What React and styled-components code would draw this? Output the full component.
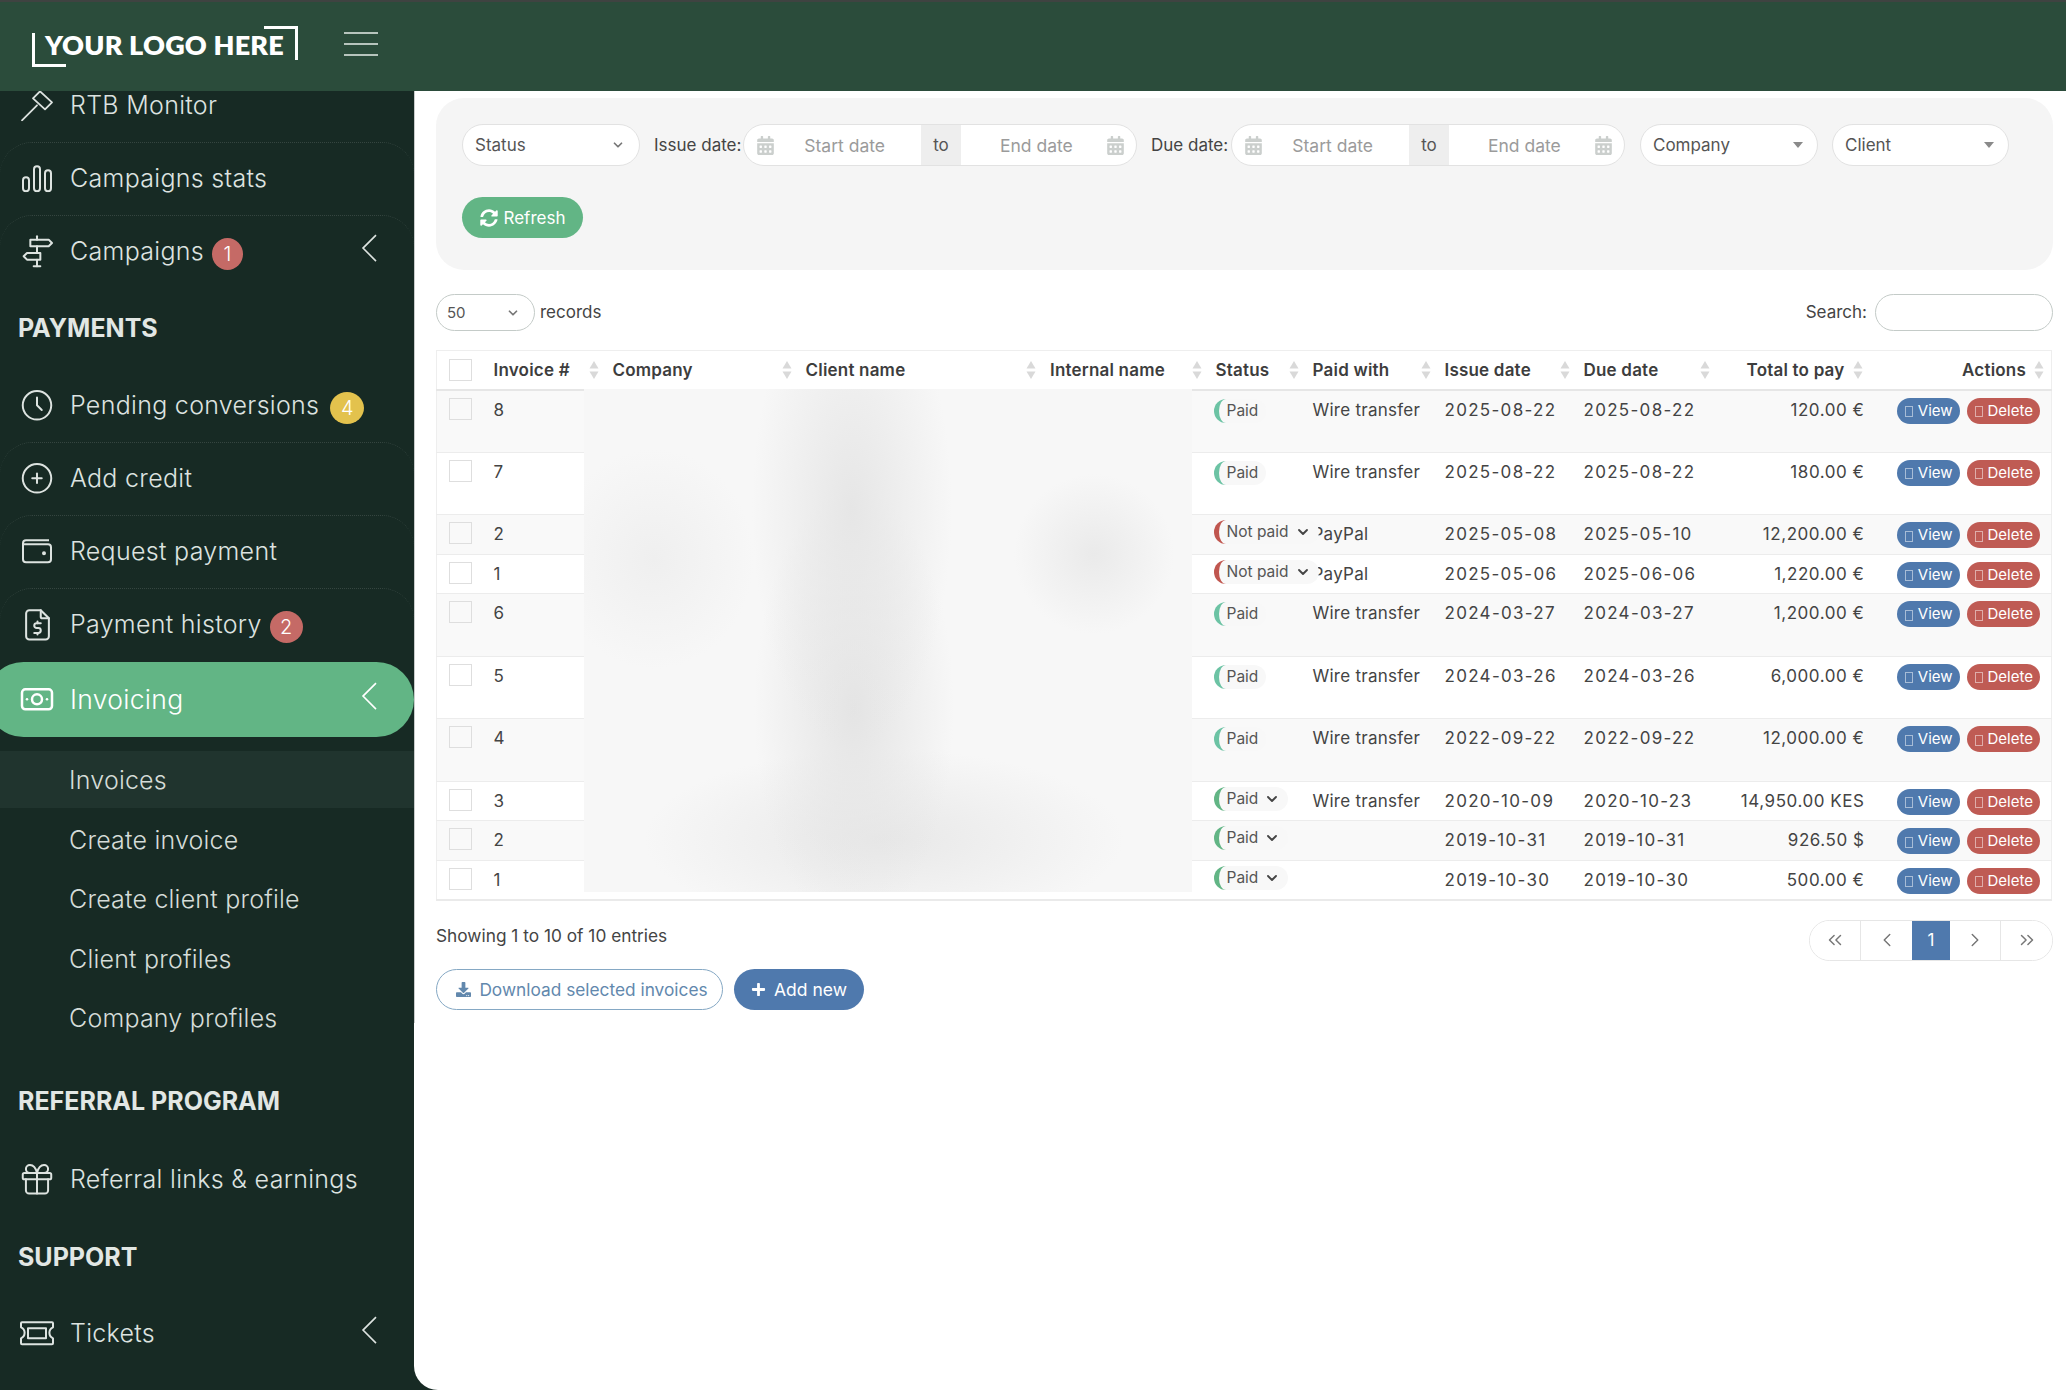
import React from "react";
import styled, { createGlobalStyle } from "styled-components";
import {
  TbDirections,
  TbClock,
  TbCirclePlus,
  TbFileDollar,
  TbCashBanknote,
  TbGift,
} from "react-icons/tb";
import { FaCalendarAlt, FaSyncAlt, FaDownload, FaPlus } from "react-icons/fa";
import { ChevronDown, ChevronLeft, ChevronRight, ChevronsLeft, ChevronsRight } from "lucide-react";

const GlobalStyle = createGlobalStyle`
  * { box-sizing: border-box; }
  html, body { margin: 0; padding: 0; background: #172a24; }
  body { font-family: "Inter", "Liberation Sans", sans-serif; color: #444; }
`;

//Hand drawn icons that the packages don't have
const HammerIcon = () => (
  <svg width="34" height="32" viewBox="0 0 34 32" fill="none" stroke="currentColor" strokeWidth="1.8">
    <path d="M2 31 L17 16" strokeLinecap="round" />
    <path d="M13 9 L20 2 L32 13 L25 20 Z" strokeLinejoin="round" />
  </svg>
);

const BarsIcon = () => (
  <svg width="32" height="28" viewBox="0 0 32 28" fill="none" stroke="currentColor" strokeWidth="2">
    <rect x="2" y="13" width="6" height="14" rx="3" />
    <rect x="13" y="2" width="6" height="25" rx="3" />
    <rect x="24" y="6" width="6" height="21" rx="3" />
  </svg>
);

const WalletIcon = () => (
  <svg width="32" height="28" viewBox="0 0 32 28" fill="none" stroke="currentColor" strokeWidth="2">
    <path d="M28 3 H5 a3 3 0 0 0 -3 3 V22 a3 3 0 0 0 3 3 H27 a3 3 0 0 0 3 -3 V10 a3 3 0 0 0 -3 -3 H2" />
    <circle cx="23" cy="16" r="1" fill="currentColor" />
  </svg>
);

const TicketIcon = () => (
  <svg width="36" height="26" viewBox="0 0 36 26" fill="none" stroke="currentColor" strokeWidth="2" strokeLinejoin="round">
    <path d="M3 2 H33 a1 1 0 0 1 1 1 V7 a6 6 0 0 0 0 11 V23 a1 1 0 0 1 -1 1 H3 a1 1 0 0 1 -1 -1 V18 a6 6 0 0 0 0 -11 V3 a1 1 0 0 1 1 -1 Z" />
    <rect x="9" y="8" width="18" height="10" />
  </svg>
);

const BackChevron = () => (
  <svg width="16" height="28" viewBox="0 0 16 28" fill="none" stroke="currentColor" strokeWidth="1.6">
    <path d="M15 1 L2 14 L15 27" />
  </svg>
);

const SortIcon = () => (
  <svg width="10" height="20" viewBox="0 0 10 20" fill="#d9d9d9">
    <path d="M5 1 L9.5 8.5 H0.5 Z" />
    <path d="M5 19 L0.5 11.5 H9.5 Z" />
  </svg>
);

const Caret = () => (
  <svg width="10" height="6" viewBox="0 0 10 6" fill="#8a8a8a">
    <path d="M0 0 H10 L5 6 Z" />
  </svg>
);

const Page = styled.div`
  width: 2066px;
  height: 1390px;
  overflow: hidden;
  display: flex;
  flex-direction: column;
`;

const Header = styled.header`
  height: 91px;
  flex: none;
  background: #2b4c3b;
  border-top: 2px solid #3f4341;
  display: flex;
  align-items: center;
  padding-left: 32px;
  position: relative;
  z-index: 2;
`;

const Logo = styled.div`
  width: 266px;
  height: 41px;
  position: relative;
  display: flex;
  align-items: center;
  padding: 0 0 4px 13px;
  color: #fff;
  font-family: "Lato", "Liberation Sans", sans-serif;
  font-weight: 800;
  font-size: 27px;
  letter-spacing: 0.2px;
  white-space: nowrap;
  &::before,
  &::after {
    content: "";
    position: absolute;
    width: 31px;
    height: 31px;
  }
  &::before {
    left: 0;
    bottom: 0;
    border-left: 3px solid #fff;
    border-bottom: 3px solid #fff;
  }
  &::after {
    right: 0;
    top: 0;
    border-right: 3px solid #fff;
    border-top: 3px solid #fff;
  }
`;

const Burger = styled.div`
  margin: 0 0 5px 46px;
  width: 34px;
  display: flex;
  flex-direction: column;
  gap: 9px;
  span {
    height: 2px;
    background: #b7c5bd;
  }
`;

const Body = styled.div`
  flex: 1;
  display: flex;
  min-height: 0;
`;

const Sidebar = styled.aside`
  width: 414px;
  flex: none;
  background: #172a24;
  overflow: hidden;
  color: #dde3e0;
`;

const SideList = styled.nav`
  margin-top: -22px;
  display: flex;
  flex-direction: column;
`;

const SideItem = styled.div`
  height: ${(p) => (p.$active ? "75px" : "73px")};
  display: flex;
  align-items: center;
  position: relative;
  font-size: ${(p) => (p.$active ? "26.5px" : "25px")};
  line-height: 1.1;
  font-weight: 300;
  letter-spacing: 0.3px;
  white-space: nowrap;
  border-top: ${(p) => (p.$line ? "1px dotted rgba(255,255,255,0.13)" : "none")};
  border-radius: ${(p) => (p.$active ? "38px" : "32px 32px 0 0")};
  background: ${(p) => (p.$active ? "#62b585" : "transparent")};
  color: ${(p) => (p.$active ? "#fff" : "inherit")};
  margin-left: ${(p) => (p.$active ? "-14px" : "0")};
  padding-left: ${(p) => (p.$active ? "84px" : "70px")};
  margin-top: ${(p) => (p.$active ? "1px" : "0")};
`;

const SideIcon = styled.span`
  position: absolute;
  left: ${(p) => (p.$active ? "36px" : "22px")};
  width: 30px;
  height: 34px;
  top: 50%;
  transform: translateY(-52%);
  display: flex;
  align-items: center;
  justify-content: center;
  svg {
    flex: none;
  }
`;

const SideChevron = styled.span`
  position: absolute;
  right: 37px;
  top: 50%;
  transform: translateY(-64%);
  display: flex;
`;

const Badge = styled.span`
  margin-left: ${(p) => p.$gap || 8}px;
  width: ${(p) => p.$width || 31}px;
  height: 32px;
  border-radius: 50%;
  background: ${(p) => (p.$warn ? "#e3c24d" : "#c56a66")};
  color: #fff;
  display: inline-flex;
  align-items: center;
  justify-content: center;
  font-size: 20px;
  font-weight: 300;
  transform: translateY(2px);
`;

const SectionTitle = styled.div`
  height: ${(p) => p.$height}px;
  padding-top: ${(p) => p.$top}px;
  padding-left: 18px;
  font-size: 25px;
  font-weight: 700;
  line-height: 32px;
  color: #e2e7e4;
  white-space: nowrap;
`;

const SubList = styled.div`
  margin-top: 14px;
  display: flex;
  flex-direction: column;
`;

const SubItem = styled.div`
  height: ${(p) => (p.$current ? "57px" : "59.5px")};
  margin-bottom: ${(p) => (p.$current ? "2px" : "0")};
  display: flex;
  align-items: center;
  padding-left: 69px;
  font-size: 25px;
  font-weight: 300;
  letter-spacing: 0.2px;
  color: #d5dcd8;
  background: ${(p) => (p.$current ? "#20342e" : "transparent")};
`;

const Main = styled.main`
  flex: 1;
  background: #fff;
  border-bottom-left-radius: 24px;
  padding: 7px 13px 0 22px;
  position: relative;
  min-width: 0;
  &::before {
    content: "";
    position: absolute;
    left: 0;
    top: 0;
    width: 1px;
    height: 932px;
    background: #c9cccb;
  }
`;

const FilterPanel = styled.section`
  height: 172px;
  background: #f5f5f5;
  border-radius: 28px;
  padding: 26px 0 0 26px;
`;

const FilterRow = styled.div`
  display: flex;
  align-items: center;
  height: 42px;
`;

const Select = styled.div`
  width: ${(p) => p.$width}px;
  height: ${(p) => p.$height || 42}px;
  margin-left: ${(p) => p.$gap || 0}px;
  background: #fff;
  border: 1px solid ${(p) => (p.$plain ? "#c4cbc8" : "#e2e2e2")};
  border-radius: 21px;
  padding: 0 ${(p) => (p.$plain ? "14px 0 10px" : "14px 0 12px")};
  display: flex;
  align-items: center;
  justify-content: space-between;
  font-size: ${(p) => p.$size || 17}px;
  color: #555;
  flex: none;
  svg {
    flex: none;
  }
`;

const FilterLabel = styled.span`
  width: ${(p) => p.$width}px;
  margin-left: 14px;
  font-size: 17px;
  color: #444;
  white-space: nowrap;
  flex: none;
`;

const DateGroup = styled.div`
  width: 394px;
  height: 42px;
  flex: none;
  display: grid;
  grid-template-columns: 177px 40px 177px;
  background: #fff;
  border: 1px solid #e2e2e2;
  border-radius: 21px;
  overflow: hidden;
`;

const DateField = styled.div`
  display: flex;
  align-items: center;
  justify-content: space-between;
  flex-direction: ${(p) => (p.$reverse ? "row-reverse" : "row")};
  padding: ${(p) => (p.$reverse ? "0 13px 0 39px" : "0 36px 0 12px")};
  font-size: 17.5px;
  color: #9b9b9b;
  white-space: nowrap;
  svg {
    color: #cbcfcd;
    font-size: 19px;
  }
`;

const DateTo = styled.div`
  background: #eeeeee;
  display: flex;
  align-items: center;
  justify-content: center;
  font-size: 17px;
  color: #555;
`;

const RefreshButton = styled.button`
  margin-top: 31px;
  width: 121px;
  height: 41px;
  border: none;
  border-radius: 21px;
  background: #62b585;
  color: #fff;
  font: inherit;
  font-size: 17px;
  display: flex;
  align-items: center;
  justify-content: center;
  gap: 6px;
  padding: 0;
`;

const RecordsBar = styled.div`
  margin-top: 24px;
  height: 37px;
  display: flex;
  align-items: center;
  justify-content: space-between;
  font-size: 17px;
  color: #444;
`;

const BarGroup = styled.div`
  display: flex;
  align-items: center;
  gap: ${(p) => p.$gap}px;
`;

const BarLabel = styled.span`
  margin-bottom: 2px;
`;

const SearchInput = styled.div`
  width: 178px;
  height: 37px;
  background: #fff;
  border: 1px solid #c4cbc8;
  border-radius: 19px;
`;

const TableWrap = styled.div`
  margin-top: 19px;
  position: relative;
`;

const Table = styled.table`
  width: 1615px;
  table-layout: fixed;
  border-collapse: collapse;
  border: 1px solid #eeeeee;
  border-bottom: 2px solid #eaeaea;
  font-size: 17px;
  color: #444;
`;

const HeadCell = styled.th`
  height: 39px;
  padding: 0 7px;
  border-bottom: 2px solid #e6e6e6;
  background: #fff;
  font-weight: 600;
  font-size: 17px;
  letter-spacing: 0.2px;
  color: #3d3d3d;
  text-align: left;
`;

const HeadInner = styled.div`
  display: flex;
  align-items: center;
  gap: 8px;
  justify-content: ${(p) => (p.$end ? "flex-end" : "space-between")};
  white-space: nowrap;
`;

const Row = styled.tr`
  background: ${(p) => (p.$odd ? "#f9f9f9" : "#fff")};
`;

const Cell = styled.td`
  height: ${(p) => (p.$tall ? "62.5px" : "39.5px")};
  padding: 7px ${(p) => (p.$pad ? p.$pad : 7)}px 0 7px;
  vertical-align: top;
  border-top: 1px solid #ececec;
  line-height: 24px;
  white-space: nowrap;
  text-align: ${(p) => (p.$right ? "right" : "left")};
  letter-spacing: ${(p) => p.$spacing || "0.25px"};
`;

const CheckBox = styled.div`
  width: 23px;
  height: 22px;
  border: 1px solid #dedede;
  margin-left: 5px;
`;

const StatusPill = styled.div`
  display: inline-flex;
  align-items: center;
  vertical-align: top;
  position: relative;
  z-index: 1;
  height: 24px;
  margin-left: -2px;
  margin-top: ${(p) => (p.$select ? "-2px" : "1px")};
  padding: 0 8px;
  gap: 6px;
  border-left: 5px solid ${(p) => (p.$unpaid ? "#c0564f" : p.$select ? "#62b585" : "#6cc3a4")};
  border-radius: 13px;
  background: #f8f8f8;
  font-size: 15.5px;
  letter-spacing: 0;
  color: #555;
`;

const ActionGroup = styled.div`
  display: flex;
  justify-content: flex-end;
  gap: 7px;
`;

const ActionButton = styled.button`
  height: 26px;
  border: none;
  border-radius: 13px;
  padding: 0 7px 0 8px;
  background: ${(p) => (p.$danger ? "#bf5b54" : "#4f79ad")};
  color: #fff;
  font: inherit;
  font-size: 15px;
  letter-spacing: 0;
  display: flex;
  align-items: center;
  gap: 5px;
  i {
    width: 8px;
    height: 11px;
    margin-top: 2px;
    border: 1px solid rgba(255, 255, 255, 0.5);
  }
`;

const BlurredColumns = styled.div`
  position: absolute;
  left: 148px;
  top: 39px;
  width: 608px;
  height: 503px;
  z-index: 1;
  background:
    radial-gradient(ellipse 100px 240px at 268px 120px, #e6e6e6 0%, rgba(230, 230, 230, 0) 100%),
    radial-gradient(ellipse 100px 220px at 270px 320px, #e4e4e4 0%, rgba(228, 228, 228, 0) 100%),
    radial-gradient(ellipse 240px 90px at 300px 450px, #e8e8e8 0%, rgba(232, 232, 232, 0) 100%),
    radial-gradient(ellipse 80px 80px at 510px 165px, #eaeaea 0%, rgba(234, 234, 234, 0) 100%),
    radial-gradient(ellipse 100px 110px at 70px 170px, #efefef 0%, rgba(239, 239, 239, 0) 100%),
    #f7f7f7;
`;

const TableFooter = styled.div`
  display: flex;
  justify-content: space-between;
  padding-top: 19px;
`;

const FooterLeft = styled.div`
  display: flex;
  flex-direction: column;
  gap: 17px;
`;

const EntriesInfo = styled.div`
  height: 32px;
  line-height: 32px;
  font-size: 17.3px;
  color: #444;
`;

const FooterButtons = styled.div`
  display: flex;
  gap: 11px;
`;

const OutlineButton = styled.button`
  width: 287px;
  height: 41px;
  background: #fff;
  border: 1px solid #85a8c4;
  border-radius: 21px;
  color: #6288ad;
  font: inherit;
  font-size: 17.3px;
  display: flex;
  align-items: center;
  justify-content: center;
  gap: 8px;
  padding: 0 0 0 5px;
`;

const SolidButton = styled.button`
  width: 130px;
  height: 41px;
  background: #4f79ad;
  border: none;
  border-radius: 21px;
  color: #fff;
  font: inherit;
  font-size: 17.5px;
  display: flex;
  align-items: center;
  justify-content: center;
  gap: 8px;
  padding: 0;
`;

const Pagination = styled.div`
  height: 41px;
  display: flex;
  border: 1px solid #e6e6e6;
  border-radius: 21px;
  overflow: hidden;
`;

const PageCell = styled.div`
  width: ${(p) => (p.$active ? "38px" : "51px")};
  display: flex;
  align-items: center;
  justify-content: center;
  color: ${(p) => (p.$active ? "#fff" : "#777")};
  background: ${(p) => (p.$active ? "#4f79ad" : "#fff")};
  border-right: ${(p) => (p.$line ? "1px solid #e6e6e6" : "none")};
  font-size: 17px;
`;

const columns = [
  { label: "Invoice #", width: 119 },
  { label: "Company", width: 193 },
  { label: "Client name", width: 244.5 },
  { label: "Internal name", width: 165.5 },
  { label: "Status", width: 97 },
  { label: "Paid with", width: 132 },
  { label: "Issue date", width: 139 },
  { label: "Due date", width: 140 },
  { label: "Total to pay", width: 153, end: true },
  { label: "Actions", width: 182, end: true },
];

const invoices = [
  { id: 8, tall: true, status: "Paid", method: "Wire transfer", issue: "2025-08-22", due: "2025-08-22", total: "120.00 €" },
  { id: 7, tall: true, status: "Paid", method: "Wire transfer", issue: "2025-08-22", due: "2025-08-22", total: "180.00 €" },
  { id: 2, status: "Not paid", select: true, method: "PayPal", issue: "2025-05-08", due: "2025-05-10", total: "12,200.00 €" },
  { id: 1, status: "Not paid", select: true, method: "PayPal", issue: "2025-05-06", due: "2025-06-06", total: "1,220.00 €" },
  { id: 6, tall: true, status: "Paid", method: "Wire transfer", issue: "2024-03-27", due: "2024-03-27", total: "1,200.00 €" },
  { id: 5, tall: true, status: "Paid", method: "Wire transfer", issue: "2024-03-26", due: "2024-03-26", total: "6,000.00 €" },
  { id: 4, tall: true, status: "Paid", method: "Wire transfer", issue: "2022-09-22", due: "2022-09-22", total: "12,000.00 €" },
  { id: 3, status: "Paid", select: true, method: "Wire transfer", issue: "2020-10-09", due: "2020-10-23", total: "14,950.00 KES" },
  { id: 2, status: "Paid", select: true, method: "", issue: "2019-10-31", due: "2019-10-31", total: "926.50 $" },
  { id: 1, status: "Paid", select: true, method: "", issue: "2019-10-30", due: "2019-10-30", total: "500.00 €" },
];

const App = () => {
  return (
    <Page>
      <GlobalStyle />
      <Header>
        <Logo>YOUR LOGO HERE</Logo>
        <Burger>
          <span />
          <span />
          <span />
        </Burger>
      </Header>
      <Body>
        <Sidebar>
          <SideList>
            <SideItem>
              <SideIcon><HammerIcon /></SideIcon>
              RTB Monitor
            </SideItem>
            <SideItem $line>
              <SideIcon><BarsIcon /></SideIcon>
              Campaigns stats
            </SideItem>
            <SideItem $line>
              <SideIcon><TbDirections size={40} strokeWidth={1.2} /></SideIcon>
              Campaigns
              <Badge>1</Badge>
              <SideChevron><BackChevron /></SideChevron>
            </SideItem>
            <SectionTitle $height={81} $top={24}>PAYMENTS</SectionTitle>
            <SideItem>
              <SideIcon><TbClock size={38} strokeWidth={1.25} /></SideIcon>
              Pending conversions
              <Badge $warn $width={34} $gap={11}>4</Badge>
            </SideItem>
            <SideItem $line>
              <SideIcon><TbCirclePlus size={38} strokeWidth={1.25} /></SideIcon>
              Add credit
            </SideItem>
            <SideItem $line>
              <SideIcon><WalletIcon /></SideIcon>
              Request payment
            </SideItem>
            <SideItem $line>
              <SideIcon><TbFileDollar size={39} strokeWidth={1.25} /></SideIcon>
              Payment history
              <Badge $width={33}>2</Badge>
            </SideItem>
            <SideItem $active>
              <SideIcon $active><TbCashBanknote size={40} strokeWidth={1.5} /></SideIcon>
              Invoicing
              <SideChevron><BackChevron /></SideChevron>
            </SideItem>
            <SubList>
              <SubItem $current>Invoices</SubItem>
              <SubItem>Create invoice</SubItem>
              <SubItem>Create client profile</SubItem>
              <SubItem>Client profiles</SubItem>
              <SubItem>Company profiles</SubItem>
            </SubList>
            <SectionTitle $height={95} $top={37}>REFERRAL PROGRAM</SectionTitle>
            <SideItem>
              <SideIcon><TbGift size={38} strokeWidth={1.25} /></SideIcon>
              Referral links &amp; earnings
            </SideItem>
            <SectionTitle $height={81} $top={25}>SUPPORT</SectionTitle>
            <SideItem>
              <SideIcon><TicketIcon /></SideIcon>
              Tickets
              <SideChevron><BackChevron /></SideChevron>
            </SideItem>
          </SideList>
        </Sidebar>
        <Main>
          <FilterPanel>
            <FilterRow>
              <Select $width={178}>
                Status
                <ChevronDown size={14} strokeWidth={3} color="#777" />
              </Select>
              <FilterLabel $width={89}>Issue date:</FilterLabel>
              <DateGroup>
                <DateField>
                  <FaCalendarAlt />
                  Start date
                </DateField>
                <DateTo>to</DateTo>
                <DateField $reverse>
                  <FaCalendarAlt />
                  End date
                </DateField>
              </DateGroup>
              <FilterLabel $width={80}>Due date:</FilterLabel>
              <DateGroup>
                <DateField>
                  <FaCalendarAlt />
                  Start date
                </DateField>
                <DateTo>to</DateTo>
                <DateField $reverse>
                  <FaCalendarAlt />
                  End date
                </DateField>
              </DateGroup>
              <Select $width={178} $gap={15}>
                Company
                <Caret />
              </Select>
              <Select $width={177} $gap={14}>
                Client
                <Caret />
              </Select>
            </FilterRow>
            <RefreshButton>
              <FaSyncAlt size={18} />
              Refresh
            </RefreshButton>
          </FilterPanel>

          <RecordsBar>
            <BarGroup $gap={5}>
              <Select $width={99} $height={37} $size={15} $plain>
                50
                <ChevronDown size={14} strokeWidth={3} color="#777" />
              </Select>
              <BarLabel>records</BarLabel>
            </BarGroup>
            <BarGroup $gap={8}>
              <BarLabel>Search:</BarLabel>
              <SearchInput />
            </BarGroup>
          </RecordsBar>

          <TableWrap>
            <Table>
              <colgroup>
                <col style={{ width: 50 }} />
                {columns.map((c) => (
                  <col key={c.label} style={{ width: c.width }} />
                ))}
              </colgroup>
              <thead>
                <tr>
                  <HeadCell>
                    <CheckBox />
                  </HeadCell>
                  {columns.map((c) => (
                    <HeadCell key={c.label}>
                      <HeadInner $end={c.end}>
                        {c.label}
                        <SortIcon />
                      </HeadInner>
                    </HeadCell>
                  ))}
                </tr>
              </thead>
              <tbody>
                {invoices.map((row, i) => (
                  <Row key={i} $odd={i % 2 === 0}>
                    <Cell $tall={row.tall}><CheckBox /></Cell>
                    <Cell $tall={row.tall}>{row.id}</Cell>
                    <Cell $tall={row.tall} />
                    <Cell $tall={row.tall} />
                    <Cell $tall={row.tall} />
                    <Cell $tall={row.tall}>
                      <StatusPill $unpaid={row.status !== "Paid"} $select={row.select}>
                        {row.status}
                        {row.select && <ChevronDown size={16} strokeWidth={2.8} color="#444" />}
                      </StatusPill>
                    </Cell>
                    <Cell $tall={row.tall}>{row.method}</Cell>
                    <Cell $tall={row.tall} $spacing="1.3px">{row.issue}</Cell>
                    <Cell $tall={row.tall} $spacing="1.3px">{row.due}</Cell>
                    <Cell $tall={row.tall} $spacing="0.55px" $pad={5} $right>{row.total}</Cell>
                    <Cell $tall={row.tall} $pad={11}>
                      <ActionGroup>
                        <ActionButton><i />View</ActionButton>
                        <ActionButton $danger><i />Delete</ActionButton>
                      </ActionGroup>
                    </Cell>
                  </Row>
                ))}
              </tbody>
            </Table>
            <BlurredColumns />
          </TableWrap>

          <TableFooter>
            <FooterLeft>
              <EntriesInfo>Showing 1 to 10 of 10 entries</EntriesInfo>
              <FooterButtons>
                <OutlineButton>
                  <FaDownload size={15} />
                  Download selected invoices
                </OutlineButton>
                <SolidButton>
                  <FaPlus size={15} />
                  Add new
                </SolidButton>
              </FooterButtons>
            </FooterLeft>
            <Pagination>
              <PageCell $line><ChevronsLeft size={22} strokeWidth={1.6} /></PageCell>
              <PageCell><ChevronLeft size={22} strokeWidth={1.6} /></PageCell>
              <PageCell $active>1</PageCell>
              <PageCell $line><ChevronRight size={22} strokeWidth={1.6} /></PageCell>
              <PageCell><ChevronsRight size={22} strokeWidth={1.6} /></PageCell>
            </Pagination>
          </TableFooter>
        </Main>
      </Body>
    </Page>
  );
};

export default App;
